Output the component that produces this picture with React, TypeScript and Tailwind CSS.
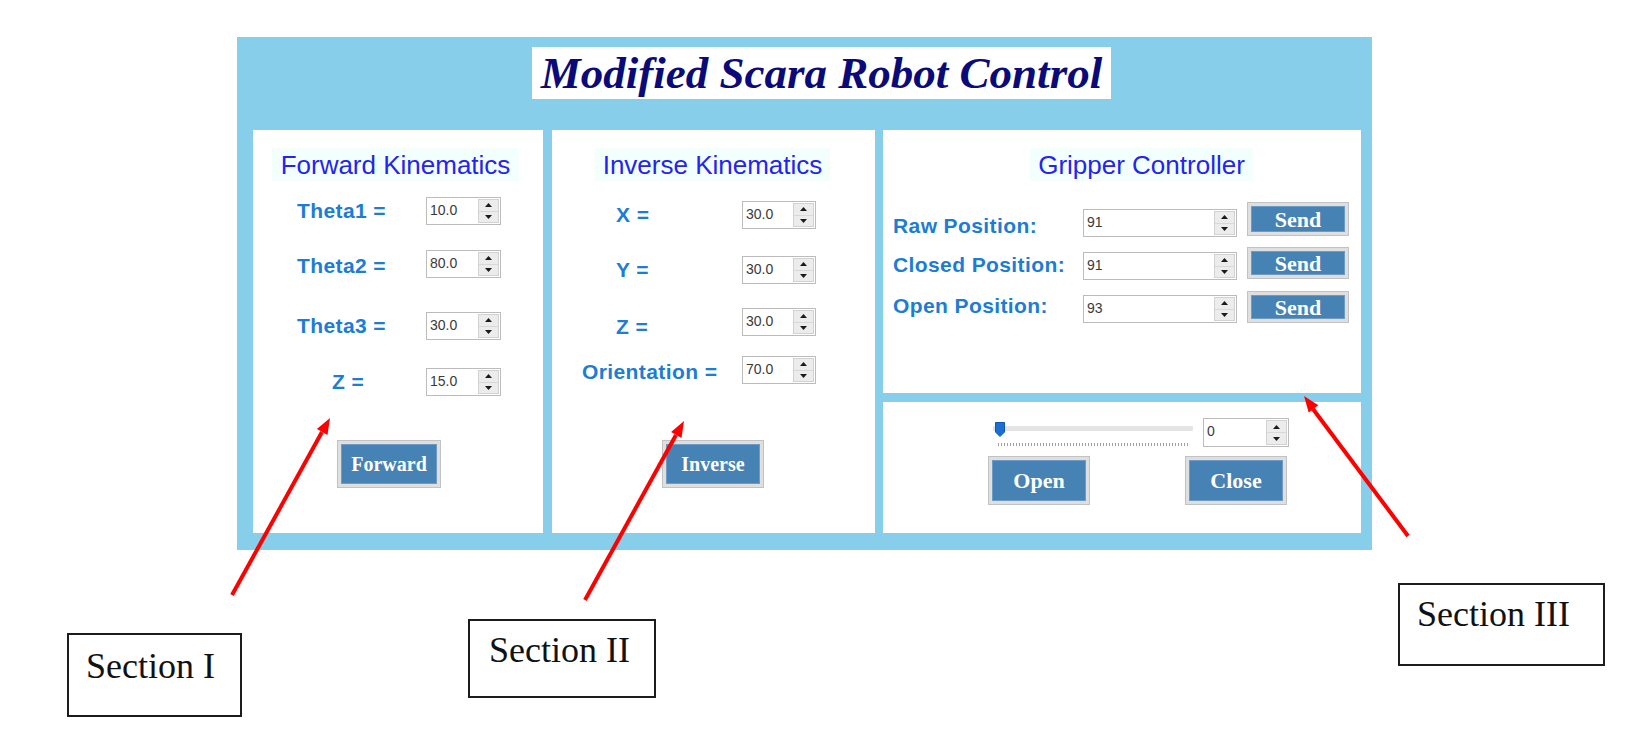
import React from 'react';

const sans = "font-['Liberation_Sans',Arial,sans-serif]";
const serif = "font-['Liberation_Serif','Times_New_Roman',serif]";

const Spin = ({ value, className }: { value: string; className: string }) => (
  <div className={`flex border border-[#bcbcbc] bg-white ${className}`}>
    <div className={`flex-1 flex items-center pl-[3px] pb-[3px] ${sans} text-[14px] leading-none text-[#3a3a3a]`}>
      {value}
    </div>
    <div className="w-[21px] m-[1px] flex flex-col border border-[#d2d2d2] bg-[#ececec]">
      <div className="flex-1 flex items-center justify-center border-b border-[#d8d8d8]">
        <svg width="7" height="4" viewBox="0 0 7 4">
          <path d="M0 4 L3.5 0 L7 4 Z" fill="#1a1a1a" />
        </svg>
      </div>
      <div className="flex-1 flex items-center justify-center">
        <svg width="7" height="4" viewBox="0 0 7 4">
          <path d="M0 0 L3.5 4 L7 0 Z" fill="#1a1a1a" />
        </svg>
      </div>
    </div>
  </div>
);

const WinButton = ({ label, className, textSize }: { label: string; className: string; textSize: string }) => (
  <div className={`border border-[#c2c2c2] bg-[#dfdfdf] p-[3px] ${className}`}>
    <div
      className={`h-full flex items-center justify-center bg-[#4682b4] border border-[#6b9bc6] ${serif} font-bold text-white ${textSize}`}
    >
      {label}
    </div>
  </div>
);

const Heading = ({ children, className }: { children: React.ReactNode; className: string }) => (
  <div className={`h-[33px] bg-[#f3fffd] flex items-center justify-center ${sans} text-[26px] leading-none text-[#2424f0] ${className}`}>
    {children}
  </div>
);

const label = `${sans} font-bold text-[21px] tracking-[0.4px] leading-[24px] text-[#1c7cd6]`;

const SectionBox = ({ text, className }: { text: string; className: string }) => (
  <div className={`absolute border-2 border-[#1c1c1c] bg-white ${serif} text-[36px] leading-none text-[#111] ${className}`}>
    {text}
  </div>
);

export default function App() {
  return (
    <div className="relative w-[1636px] h-[746px] bg-white overflow-hidden">
      <div className="pl-[237px] pt-[37px]">
        <div className="w-[1135px] h-[513px] bg-[#87ceeb] flex flex-col">
          {/* Title */}
          <div className="ml-[295px] mt-[10px] w-[579px] h-[52px] bg-white flex items-center justify-center">
            <span className={`${serif} font-bold italic text-[45px] leading-none text-[#0a0a78]`}>
              Modified Scara Robot Control
            </span>
          </div>

          <div className="mt-[31px] ml-[16px] h-[403px] flex">
            {/* Forward Kinematics */}
            <div className="w-[290px] h-full bg-white flex flex-col">
              <Heading className="ml-[19px] mt-[18px] w-[247px]">Forward Kinematics</Heading>
              <div className="mt-[16px] h-[28px] flex items-center">
                <div className={`w-[173px] pl-[44px] ${label}`}>Theta1 =</div>
                <Spin value="10.0" className="w-[75px] h-[28px]" />
              </div>
              <div className="mt-[25px] h-[28px] flex items-center">
                <div className={`w-[173px] pl-[44px] pt-[4px] ${label}`}>Theta2 =</div>
                <Spin value="80.0" className="w-[75px] h-[28px]" />
              </div>
              <div className="mt-[34px] h-[28px] flex items-center">
                <div className={`w-[173px] pl-[44px] ${label}`}>Theta3 =</div>
                <Spin value="30.0" className="w-[75px] h-[28px]" />
              </div>
              <div className="mt-[28px] h-[28px] flex items-center">
                <div className={`w-[173px] pl-[79px] ${label}`}>Z =</div>
                <Spin value="15.0" className="w-[75px] h-[28px]" />
              </div>
              <WinButton label="Forward" textSize="text-[20px]" className="mt-[44px] ml-[84px] w-[104px] h-[48px]" />
            </div>

            {/* Inverse Kinematics */}
            <div className="ml-[9px] w-[323px] h-full bg-white flex flex-col">
              <Heading className="ml-[43px] mt-[18px] w-[235px]">Inverse Kinematics</Heading>
              <div className="mt-[20px] h-[28px] flex items-center">
                <div className={`w-[190px] pl-[64px] ${label}`}>X =</div>
                <Spin value="30.0" className="w-[74px] h-[28px]" />
              </div>
              <div className="mt-[27px] h-[28px] flex items-center">
                <div className={`w-[190px] pl-[64px] ${label}`}>Y =</div>
                <Spin value="30.0" className="w-[74px] h-[28px]" />
              </div>
              <div className="mt-[24px] h-[28px] flex items-center">
                <div className={`w-[190px] pl-[64px] pt-[10px] ${label}`}>Z =</div>
                <Spin value="30.0" className="w-[74px] h-[28px]" />
              </div>
              <div className="mt-[20px] h-[28px] flex items-center">
                <div className={`w-[190px] pl-[30px] pt-[4px] ${label}`}>Orientation =</div>
                <Spin value="70.0" className="w-[74px] h-[28px]" />
              </div>
              <WinButton label="Inverse" textSize="text-[20px]" className="mt-[56px] ml-[110px] w-[102px] h-[48px]" />
            </div>

            {/* Gripper */}
            <div className="ml-[8px] w-[478px] h-full flex flex-col">
              <div className="h-[263px] bg-white flex flex-col">
                <Heading className="ml-[147px] mt-[18px] w-[223px]">Gripper Controller</Heading>
                <div className="mt-[21px] flex items-start">
                  <div className={`w-[200px] shrink-0 pl-[10px] mt-[12px] ${label}`}>Raw Position:</div>
                  <Spin value="91" className="mt-[7px] w-[154px] h-[28px]" />
                  <WinButton label="Send" textSize="text-[22px]" className="ml-[10px] w-[102px] h-[34px]" />
                </div>
                <div className="mt-[9px] flex items-start">
                  <div className={`w-[200px] shrink-0 pl-[10px] mt-[6px] ${label}`}>Closed Position:</div>
                  <Spin value="91" className="mt-[5px] w-[154px] h-[28px]" />
                  <WinButton label="Send" textSize="text-[22px]" className="ml-[10px] w-[102px] h-[32px]" />
                </div>
                <div className="mt-[11px] flex items-start">
                  <div className={`w-[200px] shrink-0 pl-[10px] mt-[3px] ${label}`}>Open Position:</div>
                  <Spin value="93" className="mt-[4px] w-[154px] h-[28px]" />
                  <WinButton label="Send" textSize="text-[22px]" className="ml-[10px] w-[102px] h-[32px]" />
                </div>
              </div>

              <div className="mt-[9px] h-[131px] bg-white flex flex-col">
                <div className="mt-[16px] pl-[110px] flex">
                  <div className="relative w-[200px] h-[29px]">
                    <div className="mt-[8px] h-[5px] bg-[#e4e4e4] rounded-[1px]" />
                    <div className="mt-[12px] ml-[5px] w-[192px] h-[3px] bg-[repeating-linear-gradient(90deg,#a0a0a0_0_1px,transparent_1px_3px)]" />
                    <svg className="absolute left-[2px] top-[4px]" width="10" height="15" viewBox="0 0 10 15">
                      <path d="M0.5 0.5 H9.5 V10 L5 14.5 L0.5 10 Z" fill="#1a6fd6" stroke="#0f56b0" strokeWidth="1" />
                    </svg>
                  </div>
                  <Spin value="0" className="ml-[10px] w-[86px] h-[29px]" />
                </div>
                <div className="mt-[9px] flex">
                  <WinButton label="Open" textSize="text-[22px]" className="ml-[105px] w-[102px] h-[49px]" />
                  <WinButton label="Close" textSize="text-[22px]" className="ml-[95px] w-[102px] h-[49px]" />
                </div>
              </div>
            </div>
          </div>
        </div>
      </div>

      {/* Annotation arrows */}
      <svg className="absolute left-0 top-0 pointer-events-none" width="1636" height="746" viewBox="0 0 1636 746">
        <line x1="232" y1="595" x2="322" y2="432" stroke="#ff0000" strokeWidth="4" />
        <polygon points="330,418 327.5,435 316.9,429" fill="#ff0000" />
        <line x1="585" y1="600" x2="676" y2="435" stroke="#ff0000" strokeWidth="4" />
        <polygon points="684,421 681.5,438 671.1,432" fill="#ff0000" />
        <line x1="1408" y1="536" x2="1313" y2="409" stroke="#ff0000" strokeWidth="4" />
        <polygon points="1304,396 1318.3,405.2 1308.7,412.4" fill="#ff0000" />
      </svg>

      <SectionBox text="Section I" className="left-[67px] top-[633px] w-[175px] h-[84px] pl-[17px] pt-[13px]" />
      <SectionBox text="Section II" className="left-[468px] top-[619px] w-[188px] h-[79px] pl-[19px] pt-[11px]" />
      <SectionBox text="Section III" className="left-[1398px] top-[583px] w-[207px] h-[83px] pl-[17px] pt-[11px]" />
    </div>
  );
}
